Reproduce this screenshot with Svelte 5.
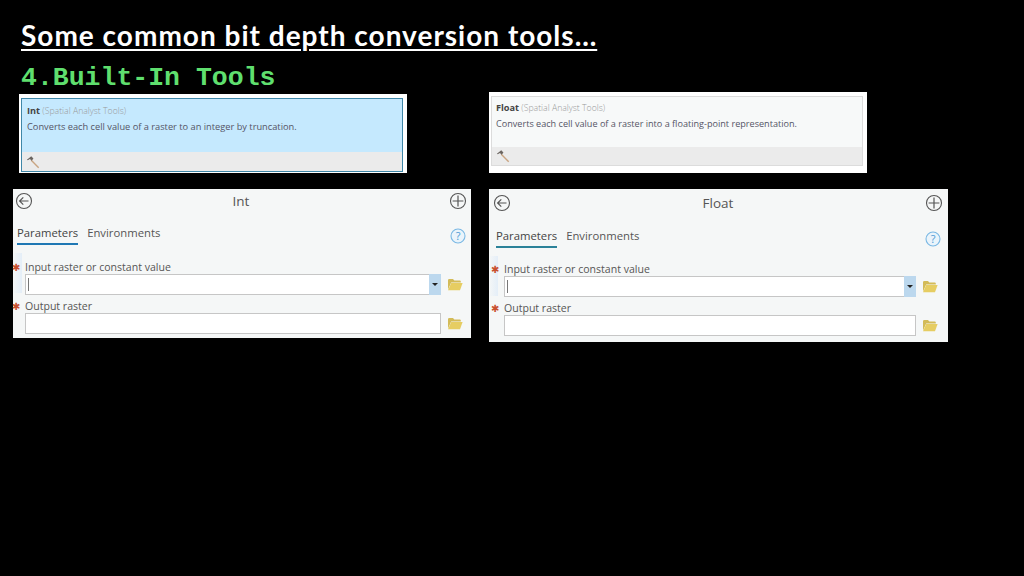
<script>
  const panels = [
    { cls: 'int', title: 'Int' },
    { cls: 'float', title: 'Float' }
  ];
  const cards = [
    { cls: 'int', name: 'Int', desc: 'Converts each cell value of a raster to an integer by truncation.' },
    { cls: 'float', name: 'Float', desc: 'Converts each cell value of a raster into a floating-point representation.' }
  ];
</script>

{#snippet folder()}
  <svg class="folder" viewBox="0 0 16 13" width="16" height="13" aria-hidden="true">
    <path d="M1 11.5V2.2Q1 1 2.2 1H6l1.3 1.6h5.5q1 0 1 1V4.6H4.2L1 11.5z" fill="#d3bb58" />
    <path d="M1 12.2 4.2 5H15.6l-2.6 7.2z" fill="#e6cd62" />
  </svg>
{/snippet}

{#snippet hammer()}
  <svg viewBox="0 0 16 16" width="14" height="14" aria-hidden="true">
    <path d="M6 6 14.5 14.5" stroke="#c9a582" stroke-width="1.6" fill="none" />
    <path d="M1 5.5 6 1.5 8.5 4 6.5 6.5 4.5 4.5 2 6z" fill="#6b6560" />
  </svg>
{/snippet}

<main class="page">
  <h1>Some common bit depth conversion tools…</h1>
  <h2>4.Built-In Tools</h2>

  <section class="cards">
    {#each cards as c}
      <article class="card {c.cls}">
        <div class="card-inner">
          <div class="card-body">
            <p class="card-head"><b>{c.name}</b> <span>(Spatial Analyst Tools)</span></p>
            <p class="card-desc">{c.desc}</p>
          </div>
          <div class="card-foot">{@render hammer()}</div>
        </div>
      </article>
    {/each}
  </section>

  <section class="panels">
    {#each panels as p}
      <article class="panel {p.cls}">
        <header class="head">
          <svg viewBox="0 0 18 18" width="18" height="18" aria-hidden="true">
            <circle cx="9" cy="9" r="7.5" fill="none" stroke="#555" stroke-width="1.1" />
            <path d="M13.5 9H4.8M8.3 5.3 4.6 9l3.7 3.7" fill="none" stroke="#555" stroke-width="1.2" />
          </svg>
          <span class="title">{p.title}</span>
          <svg viewBox="0 0 18 18" width="18" height="18" aria-hidden="true">
            <circle cx="9" cy="9" r="7.5" fill="none" stroke="#555" stroke-width="1.1" />
            <path d="M9 3.6v10.8M3.6 9h10.8" fill="none" stroke="#555" stroke-width="1.2" />
          </svg>
        </header>

        <nav class="tabs">
          <span class="tab active">Parameters</span>
          <span class="tab">Environments</span>
          <svg class="help" viewBox="0 0 16 16" width="16" height="16" aria-hidden="true">
            <circle cx="8" cy="8" r="7" fill="#eaf4fb" stroke="#7ab8e4" stroke-width="1.1" />
            <text x="8" y="12" text-anchor="middle" class="q">?</text>
          </svg>
        </nav>

        <div class="fields">
          <div class="glow"></div>
          <div class="field">
            <label><i>✱</i>Input raster or constant value</label>
            <div class="row">
              <div class="input combo">
                <span class="caret"></span>
                <span class="drop"><b></b></span>
              </div>
              {@render folder()}
            </div>
          </div>
          <div class="field">
            <label><i>✱</i>Output raster</label>
            <div class="row">
              <div class="input"></div>
              {@render folder()}
            </div>
          </div>
        </div>
      </article>
    {/each}
  </section>
</main>

<style>
  :global(body) { margin: 0; background: #000; }
  p, h1, h2 { margin: 0; }
  .page {
    width: 1024px;
    height: 576px;
    box-sizing: border-box;
    background: #000;
    overflow: hidden;
    padding-top: 18px;
    font-family: "Open Sans", sans-serif;
  }
  h1 {
    margin-left: 21px;
    width: max-content;
    font: 700 28px/34px Lato, sans-serif;
    letter-spacing: 1px;
    color: #fff;
    text-decoration: underline;
    text-decoration-thickness: 2px;
    text-underline-offset: 3px;
  }
  h2 {
    margin: 13px 0 0 21px;
    font: 700 26.5px/26px "Liberation Mono", monospace;
    color: #5fdf6e;
  }
  .cards { display: flex; align-items: flex-end; margin: 1px 0 0 19px; }
  .card { box-sizing: border-box; background: #fff; }
  .card.int { width: 388px; height: 79px; padding: 4px 4px 1px 2px; margin-right: 82px; }
  .card.float { width: 378px; height: 81px; padding: 4px 4px 7px 2px; }
  .card-inner { height: 100%; box-sizing: border-box; display: flex; flex-direction: column; }
  .int .card-inner { border: 1.5px solid #3f87a8; background: #c5e9fe; }
  .float .card-inner { border: 1px solid #dcdcdc; background: #f7f9f9; }
  .card-body { flex: 1; padding: 4px 4px 0 5px; color: #555; }
  .float .card-body { padding: 3px 4px 0; }
  .card-head { font-size: 8.7px; line-height: 15px; color: #9a9a9a; font-weight: 300; }
  .card-head b { color: #444; font-size: 9.2px; font-weight: 700; }
  .card-desc { font-size: 9.25px; line-height: 16px; color: #556; }
  .float .card-desc { font-size: 9.1px; }
  .card-foot { height: 19px; padding-left: 4px; background: #ebebeb; display: flex; align-items: center; }
  .float .card-foot { height: 18px; }
  .panels { display: flex; align-items: flex-start; margin: 16px 0 0 13px; }
  .panel { position: relative; box-sizing: border-box; width: 459px; background: #f5f7f7; color: #555; }
  .panel.int { width: 458px; height: 149px; margin-right: 18px; }
  .panel.float { height: 153px; }
  .head {
    display: grid;
    grid-template-columns: 1fr auto 1fr;
    align-items: center;
    height: 24px;
    padding: 0 4px 0 2px;
  }
  .float .head { height: 28px; padding: 0 5px 0 4px; }
  .head svg:last-child { justify-self: end; }
  .title { font-size: 13.5px; line-height: 24px; color: #555; }
  .tabs {
    display: flex;
    align-items: flex-start;
    gap: 9px;
    margin: 10px 0 0 4px;
    padding-right: 5px;
    height: 22px;
  }
  .float .tabs { margin: 9px 0 0 7px; padding-right: 7px; }
  .tab { font-size: 11.3px; line-height: 20px; height: 20px; }
  .tab.active { color: #444; border-bottom: 2px solid #1f78b4; }
  .float .tab.active { border-bottom-color: #2b8299; }
  .help { margin: 5px 0 0 auto; }
  .q { font: 400 11px "Open Sans", sans-serif; fill: #4d9ad4; }
  .fields { position: relative; padding: 14px 0 0 12px; }
  .float .fields { padding: 13px 0 0 15px; }
  .glow { position: absolute; left: 0; top: 8px; width: 9px; height: 40px; background: linear-gradient(90deg, #f5f7f7, #e4eef8); }
  .field { position: relative; }
  .field + .field { margin-top: 3px; }
  label { display: block; padding-top: 2px; font-size: 10.55px; line-height: 13px; color: #555; }
  label i { position: absolute; left: -13px; width: 8px; text-align: center; font: 400 10px/13px "DejaVu Sans", sans-serif; color: #c9502f; }
  .row { display: flex; align-items: center; gap: 6px; }
  .input {
    position: relative;
    box-sizing: border-box;
    width: 416px;
    height: 21px;
    background: #fff;
    border: 1px solid #c6c6c6;
  }
  .float .input { width: 412px; }
  .caret { position: absolute; left: 2px; top: 3px; width: 1px; height: 13px; background: #777; }
  .drop { position: absolute; right: -1px; top: -1px; bottom: -1px; width: 12px; background: #bcd8ee; display: flex; align-items: center; justify-content: center; }
  .drop b { border: 3px solid transparent; border-top-color: #222; border-bottom: 0; }
</style>
